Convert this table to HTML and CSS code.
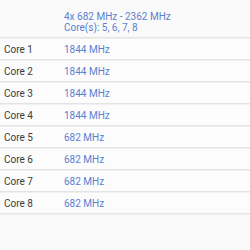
FILE: index.html
```html
<!DOCTYPE html>
<html>
<head>
<meta charset="utf-8">
<link rel="stylesheet" href="styles.css">
</head>
<body>
<div class="list">
  <div class="row head">
    <div class="label"></div>
    <div class="value">
      <div>4x 682 MHz - 2362 MHz</div>
      <div>Core(s): 5, 6, 7, 8</div>
    </div>
  </div>
  <div class="row"><div class="label">Core 1</div><div class="value">1844 MHz</div></div>
  <div class="row"><div class="label">Core 2</div><div class="value">1844 MHz</div></div>
  <div class="row"><div class="label">Core 3</div><div class="value">1844 MHz</div></div>
  <div class="row"><div class="label">Core 4</div><div class="value">1844 MHz</div></div>
  <div class="row"><div class="label">Core 5</div><div class="value">682 MHz</div></div>
  <div class="row"><div class="label">Core 6</div><div class="value">682 MHz</div></div>
  <div class="row"><div class="label">Core 7</div><div class="value">682 MHz</div></div>
  <div class="row"><div class="label">Core 8</div><div class="value">682 MHz</div></div>
</div>
</body>
</html>
```
FILE: styles.css
```css
html, body {
  margin: 0;
  padding: 0;
  background: #fafafa;
  font-family: Roboto, "Noto Sans", sans-serif;
  font-size: 10px;
}
.list {
  display: flex;
  flex-direction: column;
}
.row {
  display: flex;
  align-items: center;
  height: 20px;
  border-bottom: 1px solid #e4e4e4;
  box-shadow: 0 1px 0 #f0f0f0;
  margin-bottom: 1px;
  background: #fcfcfc;
}
.row.head {
  height: 37px;
  align-items: flex-start;
  background: #fafafa;
}
.head .value {
  padding-top: 11px;
  line-height: 11px;
}
.label {
  width: 60px;
  padding-left: 4px;
  color: #3a3a3a;
}
.value {
  color: #5b7fd0;
}
```
